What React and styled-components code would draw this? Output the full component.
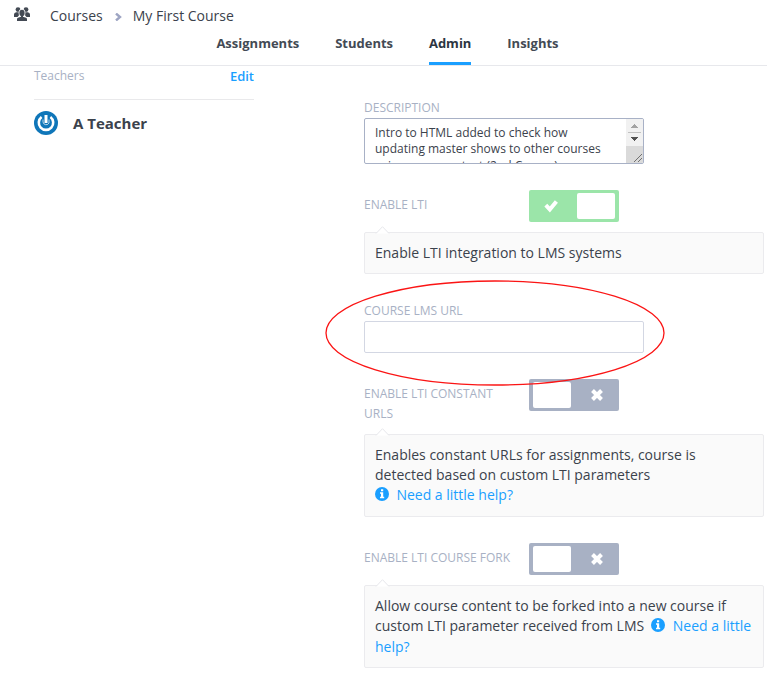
import React from "react";
import styled, { createGlobalStyle, css } from "styled-components";

const GlobalStyle = createGlobalStyle`
  * { box-sizing: border-box; }
  body {
    margin: 0;
    background: #fff;
    color: #3b424c;
    font-family: "Open Sans", "Noto Sans", sans-serif;
    font-size: 14px;
    line-height: 20px;
    overflow: hidden;
  }
`;

const Page = styled.div`
  position: relative;
  width: 767px;
  height: 680px;
  overflow: hidden;
`;

const Header = styled.header`
  height: 66px;
  border-bottom: 1px solid #e7e8ec;
`;

const Breadcrumb = styled.div`
  display: flex;
  align-items: center;
  height: 32px;
  padding-left: 14px;
`;

const PeopleIcon = styled.svg`
  width: 16px;
  height: 14px;
  margin: 0 20px 4px 0;
  fill: #434a54;
`;

const ChevronIcon = styled.svg`
  width: 7px;
  height: 8px;
  margin: 1px 11px 0 12px;
  fill: none;
  stroke: #9ea5c3;
  stroke-width: 2.4;
`;

const Tabs = styled.nav`
  display: flex;
  gap: 35.9px;
  height: 33px;
  padding-left: 216.4px;
`;

const Tab = styled.a`
  height: 33px;
  padding-top: 1px;
  font-size: 13px;
  font-weight: 700;
  color: #434a54;
  ${(p) => p.$active && css`
    color: #2c3541;
    border-bottom: 3px solid #1a9fff;
  `}
`;

const Body = styled.div`
  display: grid;
  grid-template-columns: 220px 400px;
  column-gap: 110px;
  padding-left: 34px;
`;

const SideHead = styled.div`
  display: flex;
  justify-content: space-between;
  height: 34px;
  border-bottom: 1px solid #e9e9eb;
  font-size: 12px;
  color: #a8b1c4;
`;

const EditLink = styled.a`
  font-size: 13px;
  font-weight: 600;
  color: #1a9fff;
`;

const Teacher = styled.div`
  display: flex;
  align-items: center;
  gap: 15px;
  margin-top: 11px;
  font-size: 15px;
  font-weight: 700;
`;

const Avatar = styled.svg`
  width: 24px;
  height: 24px;
`;

const Form = styled.main`
  padding-top: 32px;
`;

const Label = styled.label`
  display: block;
  width: 150px;
  margin-top: ${(p) => (p.$spaced ? 27 : 0)}px;
  font-size: 12px;
  line-height: 20px;
  text-transform: uppercase;
  color: #a8b1c4;
`;

const Description = styled.div`
  display: flex;
  justify-content: space-between;
  width: 280px;
  height: 46px;
  border: 1px solid #a8b1c6;
  border-radius: 2px;
  overflow: hidden;
`;

const DescriptionText = styled.div`
  padding: 6px 0 0 10px;
  font-size: 12px;
  line-height: 16.4px;
  white-space: nowrap;
  height: 44px;
  overflow: hidden;
`;

const Scrollbar = styled.svg`
  flex: none;
  width: 17px;
  height: 44px;
`;

const Input = styled.input`
  display: block;
  width: 280px;
  height: 32px;
  border: 1px solid #d3d7e3;
  border-radius: 2px;
  background: #fff;
`;

const ToggleRow = styled.div`
  display: flex;
  gap: 15px;
  margin-top: 26px;
  min-height: ${(p) => (p.$tall ? 45 : 32)}px;
`;

const ToggleLabel = styled(Label)`
  padding-top: 5px;
`;

const ToggleTrack = styled.div`
  display: flex;
  flex-direction: ${(p) => (p.$on ? "row" : "row-reverse")};
  width: 90px;
  height: 32px;
  padding: 3px 4px;
  border-radius: 2px;
  background: ${(p) => (p.$on ? "#9be5a9" : "#a8b1c4")};
`;

const ToggleIcon = styled.div`
  flex: 1;
  display: flex;
  align-items: center;
  justify-content: center;
  padding: ${(p) => (p.$on ? "0 8px 0 0" : "0 0 0 8px")};
`;

const ToggleGlyph = styled.svg`
  width: 14px;
  height: 14px;
  fill: none;
  stroke: #fff;
  stroke-width: 4;
`;

const ToggleKnob = styled.div`
  width: 38px;
  height: 26px;
  border-radius: 2px;
  background: #fff;
`;

const Callout = styled.div`
  position: relative;
  width: 400px;
  height: ${(p) => p.$height}px;
  margin-top: 10px;
  padding: 10px;
  border: 1px solid #ebebee;
  border-radius: 2px;
  background: #fafafa;
  line-height: ${(p) => p.$leading || 20}px;
  white-space: nowrap;
`;

const Notch = styled.svg`
  position: absolute;
  left: 10px;
  top: -8px;
  width: 15px;
  height: 9px;
`;

const HelpLink = styled.a`
  color: #1a9fff;
`;

const InfoIcon = styled.svg`
  width: 14px;
  height: 14px;
  margin: 0 7.4px 0 ${(p) => (p.$inline ? 3.6 : 0)}px;
  vertical-align: -1px;
`;

const Annotation = styled.svg`
  position: absolute;
  left: 324px;
  top: 278px;
  width: 344px;
  height: 110px;
  pointer-events: none;
`;

function Toggle({ on }) {
  return (
    <ToggleTrack $on={on}>
      <ToggleIcon $on={on}>
        <ToggleGlyph viewBox="0 0 14 14">
          <path d={on ? "M1.8 6.200 5.800 10.400 12.400 2.400" : "M2.500 2.500 11.500 11.500M11.500 2.500 2.500 11.500"} />
        </ToggleGlyph>
      </ToggleIcon>
      <ToggleKnob />
    </ToggleTrack>
  );
}

function Info({ inline }) {
  return (
    <InfoIcon $inline={inline} viewBox="0 0 14 14">
      <circle cx="7" cy="7" r="7" fill="#1a9fff" />
      <path fill="#fff" d="M6 2.300h2.200v2H6zM5 5.300h3.200v4.500h1v1.500H5V9.800h1V6.800H5z" />
    </InfoIcon>
  );
}

function Hint({ height, leading, children }) {
  return (
    <Callout $height={height} $leading={leading}>
      <Notch viewBox="0 0 15 9">
        <path d="M1 8.500 7.500 1.700 14 8.500" fill="#fff" stroke="#e6e7eb" />
      </Notch>
      {children}
    </Callout>
  );
}

export default function App() {
  return (
    <Page>
      <GlobalStyle />
      <Header>
        <Breadcrumb>
          <PeopleIcon viewBox="0 0 16 14">
            <circle cx="4" cy="2.6" r="2.4" />
            <circle cx="12" cy="2.6" r="2.4" />
            <path d="M0 10V7.600Q0 5.600 2.200 5.300H5v3L3.500 10ZM16 10V7.600q0-2-2.200-2.300H11v3L12.500 10Z" />
            <ellipse cx="8" cy="6" rx="3.4" ry="3.900" fill="#fff" />
            <ellipse cx="8" cy="6" rx="2.600" ry="3.200" />
            <path d="M7 8h2v1.800l3 1q1 .4 1 1.500V14H3v-1.700q0-1.100 1-1.500l3-1Z" />
          </PeopleIcon>
          <span>Courses</span>
          <ChevronIcon viewBox="0 0 7 8"><path d="M1 .5 5 4 1 7.500" /></ChevronIcon>
          <span>My First Course</span>
        </Breadcrumb>
        <Tabs>
          <Tab>Assignments</Tab>
          <Tab>Students</Tab>
          <Tab $active>Admin</Tab>
          <Tab>Insights</Tab>
        </Tabs>
      </Header>
      <Body>
        <aside>
          <SideHead>
            <span>Teachers</span>
            <EditLink>Edit</EditLink>
          </SideHead>
          <Teacher>
            <Avatar viewBox="0 0 24 24">
              <circle cx="12" cy="12" r="12" fill="#0f76b9" />
              <path d="M7.600 6A7.200 7.200 0 1 0 16.400 6" fill="none" stroke="#fff" strokeWidth="2.600" />
              <path d="M12 4v8" stroke="#fff" strokeWidth="3" />
              <path d="M9 8.500v2.500a3.200 3.200 0 0 0 6 1V8.500" fill="none" stroke="#fff" strokeWidth=".7" />
            </Avatar>
            A Teacher
          </Teacher>
        </aside>
        <Form>
          <Label>Description</Label>
          <Description>
            <DescriptionText>
              Intro to HTML added to check how<br />
              updating master shows to other courses<br />
              using same context (2nd Course)
            </DescriptionText>
            <Scrollbar viewBox="0 0 17 44" shapeRendering="crispEdges">
              <path fill="#f1f1f1" d="M0 0h17v27H0z" />
              <path fill="#dadada" d="M0 27h17v17H0z" />
              <path fill="#a3a3a3" d="M5 9h7L8.500 5z" />
              <path fill="#c1c1c1" d="M2 13h13v1H2z" />
              <path fill="#505050" d="M5 18h7L8.500 22z" />
              <path d="M8 43 16 35M12 43l4-4" stroke="#555" strokeWidth=".8" fill="none" shapeRendering="auto" />
            </Scrollbar>
          </Description>
          <ToggleRow>
            <ToggleLabel>Enable LTI</ToggleLabel>
            <Toggle on />
          </ToggleRow>
          <Hint height={42}>Enable LTI integration to LMS systems</Hint>
          <Label $spaced htmlFor="lms-url">Course LMS URL</Label>
          <Input id="lms-url" />
          <ToggleRow $tall>
            <ToggleLabel>Enable LTI constant URLs</ToggleLabel>
            <Toggle />
          </ToggleRow>
          <Hint height={83}>
            Enables constant URLs for assignments, course is<br />
            detected based on custom LTI parameters<br />
            <HelpLink><Info />Need a little help?</HelpLink>
          </Hint>
          <ToggleRow>
            <ToggleLabel>Enable LTI course fork</ToggleLabel>
            <Toggle />
          </ToggleRow>
          <Hint height={83} leading={20.4}>
            Allow course content to be forked into a new course if<br />
            custom LTI parameter received from LMS{" "}
            <HelpLink><Info inline />Need a little<br />help?</HelpLink>
          </Hint>
        </Form>
      </Body>
      <Annotation viewBox="0 0 344 110">
        <ellipse cx="171" cy="55" rx="169" ry="52" fill="none" stroke="#fb1414" strokeWidth="1.300" />
      </Annotation>
    </Page>
  );
}
